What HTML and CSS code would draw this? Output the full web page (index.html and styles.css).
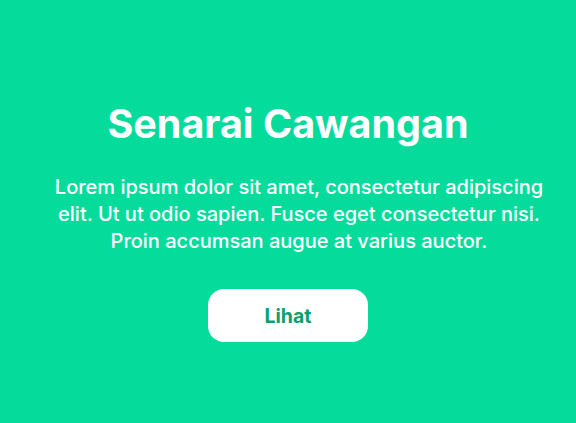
FILE: index.html
```html
<!DOCTYPE html>
<html lang="ms">
<head>
<meta charset="utf-8">
<link rel="stylesheet" href="styles.css">
</head>
<body>
<section class="hero">
  <h1 class="hero-title">Senarai Cawangan</h1>
  <p class="hero-text">Lorem ipsum dolor sit amet, consectetur adipiscing elit. Ut ut odio sapien. Fusce eget consectetur nisi. Proin accumsan augue at varius auctor.</p>
  <a class="hero-button" href="#">Lihat</a>
</section>
</body>
</html>
```
FILE: styles.css
```css
html, body {
  margin: 0;
  padding: 0;
  height: 100%;
}
body {
  background: #05dc9c;
  font-family: Inter, "Noto Sans", sans-serif;
  color: #ffffff;
}
.hero {
  display: flex;
  flex-direction: column;
  align-items: center;
  text-align: center;
  padding-top: 100px;
}
.hero-title {
  margin: 0;
  font-size: 39.5px;
  line-height: 48px;
  font-weight: 700;
}
.hero-text {
  margin: 26px 0 0;
  padding-left: 22px;
  max-width: 500px;
  font-size: 20px;
  line-height: 27px;
  font-weight: 500;
}
.hero-button {
  margin-top: 34px;
  width: 160px;
  height: 53px;
  border-radius: 16px;
  background: #ffffff;
  color: #0c9f6c;
  font-size: 19.5px;
  font-weight: 700;
  text-decoration: none;
  display: flex;
  align-items: center;
  justify-content: center;
}
```
